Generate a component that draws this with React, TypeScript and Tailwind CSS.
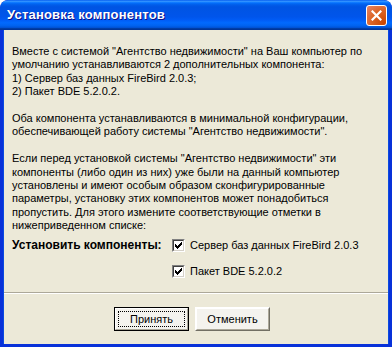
import React from "react";

const font = "font-['Liberation_Sans',Arial,sans-serif]";

function Check() {
  return (
    <div className="w-[13px] h-[13px] bg-white border border-t-[#808080] border-l-[#808080] border-b-white border-r-white shrink-0">
      <div className="w-full h-full border border-t-[#404040] border-l-[#404040] border-b-[#D4D0C8] border-r-[#D4D0C8] flex items-center justify-center">
        <svg width="7" height="7" viewBox="0 0 7 7" shapeRendering="crispEdges">
          <path d="M0 2h1v3h-1zM1 3h1v3h-1zM2 4h1v3h-1zM3 3h1v3h-1zM4 2h1v3h-1zM5 1h1v3h-1zM6 0h1v3h-1z" fill="#000" />
        </svg>
      </div>
    </div>
  );
}

export default function App() {
  const lines1 = [
    'Вместе с системой "Агентство недвижимости" на Ваш компьютер по',
    "умолчанию устанавливаются 2 дополнительных компонента:",
    "1) Сервер баз данных FireBird 2.0.3;",
    "2) Пакет BDE 5.2.0.2.",
  ];
  const lines2 = [
    "Оба компонента устанавливаются в минимальной конфигурации,",
    'обеспечивающей работу системы "Агентство недвижимости".',
  ];
  const lines3 = [
    'Если перед установкой системы "Агентство недвижимости" эти',
    "компоненты (либо один из них) уже были на данный компьютер",
    "установлены и имеют особым образом сконфигурированные",
    "параметры, установку этих компонентов может понадобиться",
    "пропустить. Для этого измените соответствующие отметки в",
    "нижеприведенном списке:",
  ];
  return (
    <div className={`w-[392px] h-[347px] flex flex-col ${font} bg-[#0831D9] rounded-t-[8px] overflow-hidden`}>
      <div className="h-[30px] shrink-0 flex items-center justify-between pl-[7px] pr-[5px] rounded-t-[8px] bg-[linear-gradient(to_bottom,#0058EE_0%,#3593FF_4%,#288EFF_6%,#127DFF_8%,#036FFC_10%,#0262EE_14%,#0057E5_20%,#0054E3_24%,#0055EB_56%,#005BF5_66%,#026AFE_76%,#0062EF_86%,#0052D6_92%,#0040AB_94%,#003092_100%)]">
        <span className="text-white font-bold text-[13px] tracking-[0.2px] [text-shadow:1px_1px_#0F1089]">Установка компонентов</span>
        <div className="w-[21px] h-[21px] rounded-[3px] border border-white bg-[radial-gradient(circle_at_90%_90%,#CC4600_0%,#DC6527_55%,#E4846A_100%)] flex items-center justify-center">
          <svg width="11" height="11" viewBox="0 0 11 11">
            <path d="M1.5 1.5L9.5 9.5M9.5 1.5L1.5 9.5" stroke="#fff" strokeWidth="2.2" strokeLinecap="square" />
          </svg>
        </div>
      </div>
      <div className="flex-1 flex flex-col bg-[#ECE9D8] mx-[3px] mb-[3px] border-x border-[#0A4AE0]">
        <div className="pt-[15px] pl-[8px] text-[11px] leading-[13.4px] text-black">
          {lines1.map((l) => (
            <div key={l} className="whitespace-nowrap h-[13.4px]">{l}</div>
          ))}
          <div className="h-[13.4px]" />
          {lines2.map((l) => (
            <div key={l} className="whitespace-nowrap h-[13.4px]">{l}</div>
          ))}
          <div className="h-[13.4px]" />
          {lines3.map((l) => (
            <div key={l} className="whitespace-nowrap h-[13.4px]">{l}</div>
          ))}
        </div>
        <div className="flex pl-[8px] mt-[6px] text-[11px]">
          <div className="w-[160px] font-bold text-[12px] leading-[14px]">Установить компоненты:</div>
          <div className="flex flex-col gap-[12px]">
            <div className="flex items-center gap-[5px] h-[14px]">
              <Check />
              <span>Сервер баз данных FireBird 2.0.3</span>
            </div>
            <div className="flex items-center gap-[5px] h-[14px]">
              <Check />
              <span>Пакет BDE 5.2.0.2</span>
            </div>
          </div>
        </div>
        <div className="mt-[14px] border-t border-[#ACA899] border-b border-b-white" />
        <div className="flex justify-center gap-[6px] mt-[13px] pr-[8px] text-[11px]">
          <div className="w-[75px] h-[24px] border border-black bg-[#F4F3EE] flex items-center justify-center">
            <div className="w-full h-full border border-t-white border-l-white border-b-[#ACA899] border-r-[#ACA899] p-[2px]">
              <div className="w-full h-full border border-dotted border-black flex items-center justify-center">Принять</div>
            </div>
          </div>
          <div className="w-[75px] h-[24px] border border-t-white border-l-white border-b-[#716F64] border-r-[#716F64] bg-[#F4F3EE] flex items-center justify-center">
            <div className="w-full h-full border border-t-[#FFFFFF] border-l-[#FFFFFF] border-b-[#ACA899] border-r-[#ACA899] flex items-center justify-center">Отменить</div>
          </div>
        </div>
      </div>
    </div>
  );
}
